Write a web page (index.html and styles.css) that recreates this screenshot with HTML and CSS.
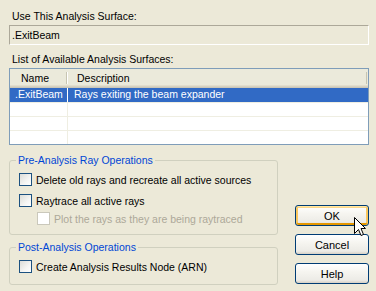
FILE: index.html
```html
<!DOCTYPE html>
<html lang="en">
<head>
    <meta charset="UTF-8">
    <title>Analysis Surface</title>
    <link rel="stylesheet" href="styles.css">
</head>
<body>
    <div class="dialog">
        <div class="label">Use This Analysis Surface:</div>
        <div class="field">.ExitBeam</div>

        <div class="label label-list">List of Available Analysis Surfaces:</div>
        <div class="listview">
            <div class="lv-head">
                <div class="col col-name">Name</div>
                <div class="col col-desc">Description</div>
            </div>
            <div class="lv-row selected">
                <div class="cell cell-name">.ExitBeam</div>
                <div class="cell cell-desc">Rays exiting the beam expander</div>
            </div>
            <div class="lv-row">
                <div class="cell cell-name"></div>
                <div class="cell cell-desc"></div>
            </div>
            <div class="lv-row">
                <div class="cell cell-name"></div>
                <div class="cell cell-desc"></div>
            </div>
            <div class="lv-row">
                <div class="cell cell-name"></div>
                <div class="cell cell-desc"></div>
            </div>
        </div>

        <div class="bottom">
            <div class="groups">
                <div class="group group-pre">
                    <div class="group-title">Pre-Analysis Ray Operations</div>
                    <label class="check check-first"><span class="box"></span>Delete old rays and recreate all active sources</label>
                    <label class="check check-second"><span class="box"></span>Raytrace all active rays</label>
                    <label class="check check-sub disabled"><span class="box"></span>Plot the rays as they are being raytraced</label>
                </div>
                <div class="group group-post">
                    <div class="group-title">Post-Analysis Operations</div>
                    <label class="check check-first"><span class="box"></span>Create Analysis Results Node (ARN)</label>
                </div>
            </div>
            <div class="buttons">
                <div class="btn-wrap">
                    <button class="btn btn-default">OK</button>
                    <svg class="cursor" width="12" height="20" viewBox="0 0 12 20">
                        <path d="M0.5 0.5 L0.5 16.5 L4.5 12.5 L7 18.5 L9.5 17.5 L7 11.5 L11.5 11.5 Z" fill="#fff" stroke="#000" stroke-width="1" stroke-linejoin="miter"/>
                    </svg>
                </div>
                <button class="btn">Cancel</button>
                <button class="btn">Help</button>
            </div>
        </div>
    </div>
</body>
</html>
```

FILE: styles.css
```css
body {
    margin: 0;
    background-color: #ece9d8;
    font-family: "Liberation Sans", Arial, sans-serif;
    font-size: 10.5px;
    color: #000;
}
.dialog {
    width: 360px;
    padding: 10px 0 0 9px;
}
.label {
    line-height: 13px;
    padding-left: 3px;
}
.field {
    margin-top: 2px;
    height: 18px;
    line-height: 18px;
    padding-left: 2px;
    border: 1px solid;
    border-color: #aca899 #fff #fff #aca899;
}
.label-list {
    margin-top: 8px;
}
.listview {
    margin-top: 2px;
    height: 75px;
    border: 1px solid #7f9db9;
    background-color: #fff;
}
.lv-head {
    display: flex;
    height: 19px;
    background-color: #ebeadb;
    box-shadow: inset 0 -1px #cbc7b8, inset 0 -2px #d6d2c2, inset 0 -3px #e2decd;
}
.col-name {
    width: 57px;
    padding-left: 11px;
    box-sizing: border-box;
    border-right: 1px solid #c7c5b2;
    margin: 3px 0 4px;
    line-height: 12px;
}
.col-desc {
    flex: 1;
    padding-left: 9px;
    margin: 3px 1px 4px 0;
    line-height: 12px;
    border-left: 1px solid #fff;
    border-right: 1px solid #c7c5b2;
}
.lv-row {
    display: flex;
    height: 14px;
    box-sizing: border-box;
}
.lv-row + .lv-row {
    border-top: 1px solid #efeee2;
}
.cell {
    line-height: 13px;
    padding-left: 5px;
}
.cell-name {
    width: 58px;
    box-sizing: border-box;
    border-right: 1px solid #efeee2;
}
.cell-desc {
    flex: 1;
    padding-left: 6px;
}
.selected {
    background-color: #316ac5;
    color: #fff;
}
.selected .cell-name {
    border-right-color: #fff;
}
.bottom {
    display: flex;
    gap: 17px;
    margin-top: 15px;
}
.groups {
    width: 269px;
}
.group {
    border: 1px solid #d0d0bf;
    border-radius: 3px;
}
.group-post {
    margin-top: 12px;
    height: 36px;
}
.group-pre {
    height: 73px;
}
.group-title {
    width: max-content;
    margin: -7px 0 0 6px;
    padding: 0 2px;
    line-height: 13px;
    background-color: #ece9d8;
    color: #0046d5;
}
.check {
    display: flex;
    align-items: center;
    height: 13px;
    padding-left: 9px;
}
.check-first {
    margin-top: 6px;
}
.check-second {
    margin-top: 8px;
}
.check-sub {
    margin-top: 5px;
    padding-left: 27px;
}
.box {
    width: 11px;
    height: 11px;
    margin-right: 4px;
    border: 1px solid #1c5180;
    background: linear-gradient(135deg, #dcdcd7 0%, #f5f5f3 60%, #fff 100%);
}
.disabled {
    color: #aca899;
}
.disabled .box {
    border-color: #cac8bb;
    background: #fff;
}
.buttons {
    width: 74px;
    display: flex;
    flex-direction: column;
    justify-content: flex-end;
    gap: 8px;
    padding-bottom: 1px;
}
.btn-wrap {
    position: relative;
}
.btn {
    display: block;
    width: 74px;
    height: 21px;
    padding: 0;
    border: 1px solid #003c74;
    border-radius: 3px;
    background: linear-gradient(#fff 0%, #f6f5f0 40%, #ecebe6 85%, #d6d0c5 100%);
    font-family: inherit;
    font-size: 11px;
    color: #000;
}
.btn-default {
    box-shadow: inset 0 1px #ffe7a2, inset 1px 0 #f9c85d, inset -1px 0 #f9c85d, inset 0 -2px #e59700, inset 2px 0 #fbc761, inset -2px 0 #fbc761, inset 0 2px #fcd789;
}
.cursor {
    position: absolute;
    left: 59px;
    top: 12px;
}
```
